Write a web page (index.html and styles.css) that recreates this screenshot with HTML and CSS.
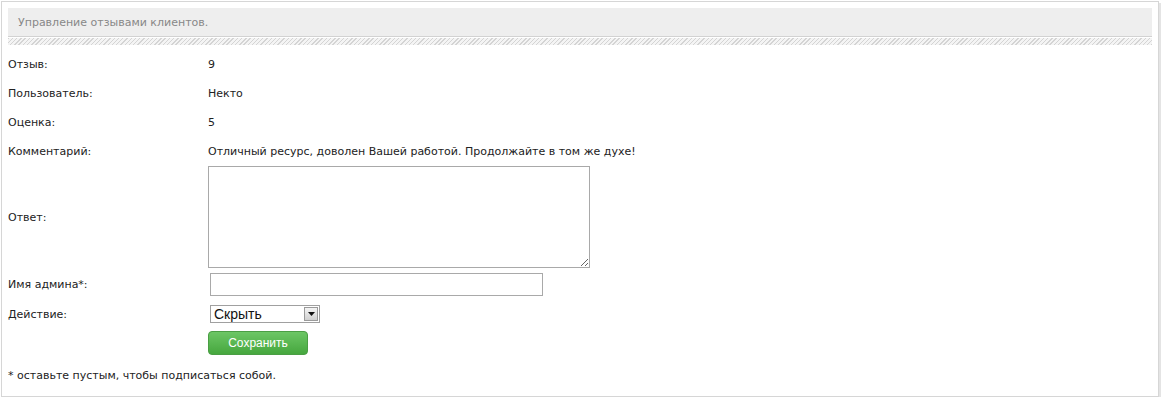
FILE: index.html
```html
<!DOCTYPE html>
<html lang="ru">
<head>
    <meta charset="UTF-8">
    <title>Управление отзывами клиентов</title>
    <link rel="stylesheet" href="styles.css">
</head>
<body>
    <div class="box">
        <div class="box-title">Управление отзывами клиентов.</div>
        <div class="stripes"></div>

        <table class="form">
            <tr>
                <td class="label">Отзыв:</td>
                <td class="value">9</td>
            </tr>
            <tr>
                <td class="label">Пользователь:</td>
                <td class="value">Некто</td>
            </tr>
            <tr>
                <td class="label">Оценка:</td>
                <td class="value">5</td>
            </tr>
            <tr>
                <td class="label">Комментарий:</td>
                <td class="value">Отличный ресурс, доволен Вашей работой. Продолжайте в том же духе!</td>
            </tr>
            <tr>
                <td class="label">Ответ:</td>
                <td><textarea class="answer"></textarea></td>
            </tr>
            <tr class="control-row">
                <td class="label">Имя админа*:</td>
                <td><input type="text" class="admin-name"></td>
            </tr>
            <tr class="control-row">
                <td class="label">Действие:</td>
                <td>
                    <div class="select">
                        <span class="select-value">Скрыть</span>
                        <span class="select-btn">
                            <svg width="7" height="4" viewBox="0 0 7 4"><path d="M0 0h7L3.5 4z" fill="#111"/></svg>
                        </span>
                    </div>
                </td>
            </tr>
            <tr class="control-row">
                <td class="label"></td>
                <td class="btn-cell"><button class="save-btn">Сохранить</button></td>
            </tr>
        </table>

        <p class="note">* оставьте пустым, чтобы подписаться собой.</p>
    </div>
</body>
</html>
```

FILE: styles.css
```css
html, body {
    margin: 0;
    padding: 0;
    background: #fff;
}
body {
    font-family: "DejaVu Sans", Verdana, sans-serif;
    font-size: 11px;
    color: #222;
}
.box {
    width: 1144px;
    height: 382px;
    margin: 1px 0 0 1px;
    padding: 6px;
    border: 1px solid #d6d6d6;
    box-shadow: 2px 2px 0 #e4e4e4;
}
.box-title {
    background: #eeeeee;
    color: #888;
    height: 28px;
    line-height: 29px;
    padding-left: 10px;
    border-bottom: 1px solid #d2d2d2;
}
.stripes {
    height: 7px;
    margin-top: 1px;
    background: repeating-linear-gradient(135deg, #d4d4d4 0 1px, #f4f4f4 1px 3px);
}
.form {
    border-collapse: collapse;
    margin-top: 5px;
}
.form td {
    padding: 0;
    vertical-align: middle;
}
.form .label {
    width: 200px;
}
.form .value {
    height: 29px;
}
.form .control-row td {
    padding: 5px 0 4px 0;
}
.form .control-row .btn-cell {
    padding: 4px 0 0 0;
}
.answer {
    display: block;
    width: 376px;
    height: 96px;
    margin: 0;
    border: 1px solid #a9a9a9;
    padding: 2px;
    resize: both;
    font-family: inherit;
}
.admin-name {
    display: block;
    width: 327px;
    height: 19px;
    margin: 0 0 0 2px;
    border: 1px solid #a9a9a9;
    padding: 1px 2px;
}
.select {
    display: flex;
    align-items: center;
    width: 108px;
    height: 16px;
    line-height: 16px;
    margin: 0 0 0 2px;
    border: 1px solid #a0a0a0;
    font-family: "Liberation Sans", Arial, sans-serif;
    font-size: 14px;
    color: #111;
}
.select-value {
    flex: 1;
    padding-left: 3px;
}
.select-btn {
    display: flex;
    align-items: center;
    justify-content: center;
    width: 12px;
    height: 12px;
    margin-right: 1px;
    border: 1px solid #9a9a9a;
    background: linear-gradient(#f4f4f4, #d0d0d0);
}
.save-btn {
    display: block;
    width: 100px;
    height: 24px;
    margin: 0;
    border: 1px solid #4a9e44;
    border-radius: 4px;
    background: linear-gradient(#6cc665, #46a73e);
    color: #fff;
    font-family: "Liberation Sans", Arial, sans-serif;
    font-size: 12px;
}
.note {
    margin: 14px 0 0 0;
}
```
